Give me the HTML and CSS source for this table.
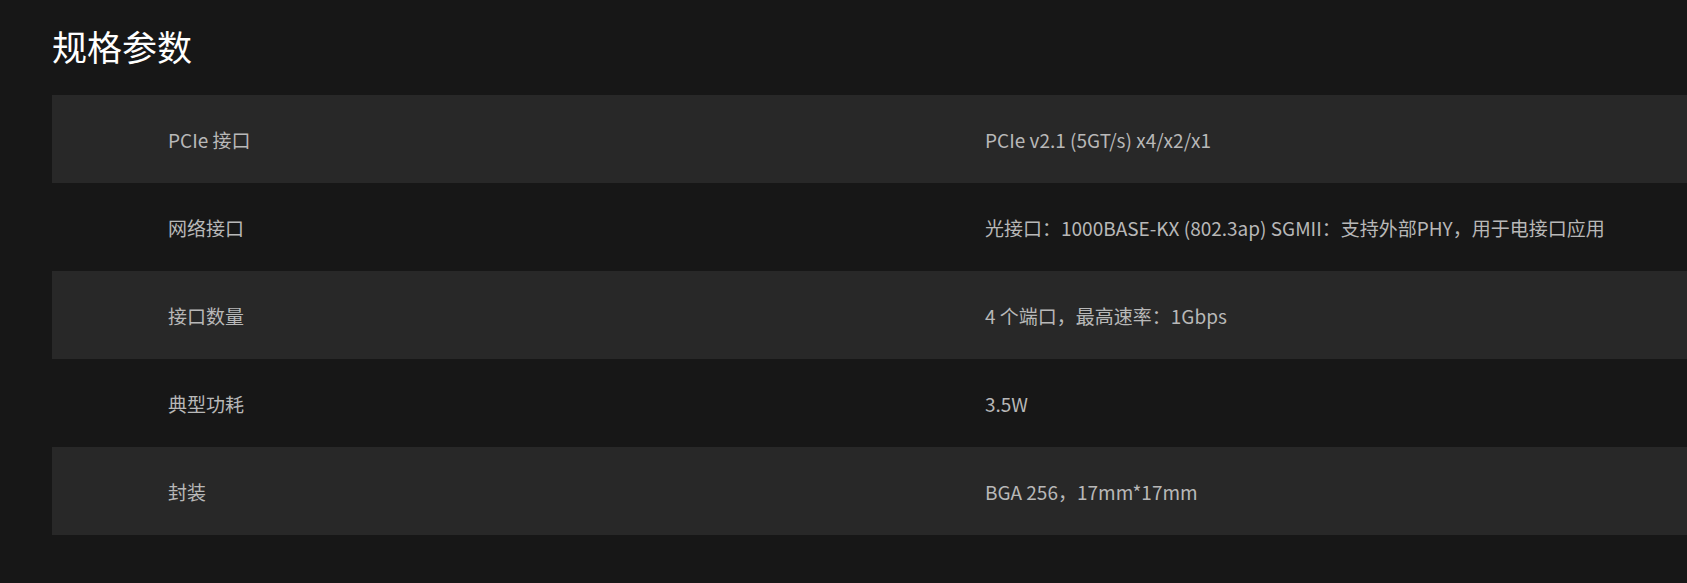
FILE: index.html
```html
<!DOCTYPE html>
<html lang="zh-CN">
  <head>
    <meta charset="UTF-8" />
    <meta name="viewport" content="width=device-width, initial-scale=1.0" />
    <title>规格参数</title>
    <link rel="stylesheet" href="styles.css">
  </head>

  <body>
    <section class="specs">
      <h2 class="specs-title">规格参数</h2>

      <div class="spec-table">
        <div class="spec-row">
          <div class="spec-name">PCIe 接口</div>
          <div class="spec-value">PCIe v2.1 (5GT/s) x4/x2/x1</div>
        </div>
        <div class="spec-row">
          <div class="spec-name">网络接口</div>
          <div class="spec-value">光接口：1000BASE-KX (802.3ap) SGMII：支持外部PHY，用于电接口应用</div>
        </div>
        <div class="spec-row">
          <div class="spec-name">接口数量</div>
          <div class="spec-value">4 个端口，最高速率：1Gbps</div>
        </div>
        <div class="spec-row">
          <div class="spec-name">典型功耗</div>
          <div class="spec-value">3.5W</div>
        </div>
        <div class="spec-row">
          <div class="spec-name">封装</div>
          <div class="spec-value">BGA 256，17mm*17mm</div>
        </div>
      </div>
    </section>
  </body>
</html>
```

FILE: styles.css
```css
body {
  margin: 0;
  padding: 0;
  font-family: "Noto Sans CJK SC", "Noto Sans", sans-serif;
  background-color: #171717;
  overflow: hidden;
}

.specs {
  padding: 19px 0 48px 52px;
}

.specs-title {
  margin: 0 0 22px;
  font-size: 35px;
  font-weight: 400;
  line-height: 54px;
  color: #fff;
}

.spec-table {
  display: flex;
  flex-direction: column;
}

.spec-row {
  display: grid;
  grid-template-columns: 817px 1fr;
  height: 88px;
  align-items: center;
}

.spec-row:nth-child(odd) {
  background-color: #282828;
}

.spec-name,
.spec-value {
  padding-left: 116px;
  font-size: 19px;
  color: #b8b8b8;
  white-space: nowrap;
}
```
